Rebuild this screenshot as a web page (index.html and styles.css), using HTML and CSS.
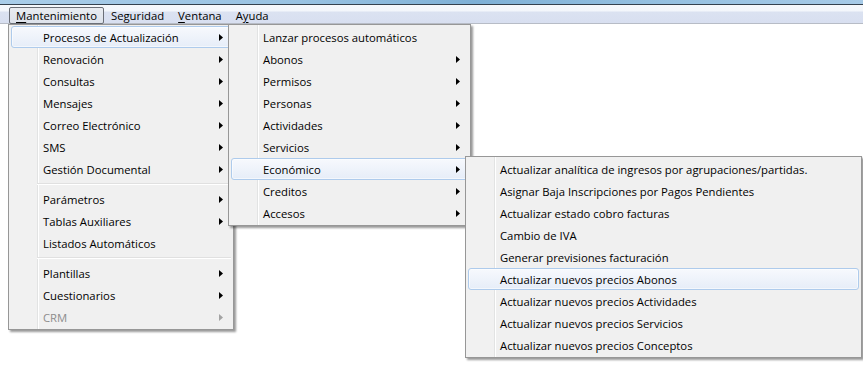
FILE: index.html
```html
<!DOCTYPE html>
<html lang="es">
<head>
<meta charset="utf-8">
<title>Menú</title>
<link rel="stylesheet" href="styles.css">
</head>
<body>
<div class="titlebar"></div>
<div class="menubar">
  <span class="mb-item pressed"><u>M</u>antenimiento</span>
  <span class="mb-item">Seguridad</span>
  <span class="mb-item"><u>V</u>entana</span>
  <span class="mb-item">A<u>y</u>uda</span>
</div>

<div class="menu m1">
  <div class="item hl"><span>Procesos de Actualización</span><svg class="arrow" width="4" height="7" viewBox="0 0 4 7"><polygon points="0,0 4,3.5 0,7"/></svg></div>
  <div class="item"><span>Renovación</span><svg class="arrow" width="4" height="7" viewBox="0 0 4 7"><polygon points="0,0 4,3.5 0,7"/></svg></div>
  <div class="item"><span>Consultas</span><svg class="arrow" width="4" height="7" viewBox="0 0 4 7"><polygon points="0,0 4,3.5 0,7"/></svg></div>
  <div class="item"><span>Mensajes</span><svg class="arrow" width="4" height="7" viewBox="0 0 4 7"><polygon points="0,0 4,3.5 0,7"/></svg></div>
  <div class="item"><span>Correo Electrónico</span><svg class="arrow" width="4" height="7" viewBox="0 0 4 7"><polygon points="0,0 4,3.5 0,7"/></svg></div>
  <div class="item"><span>SMS</span><svg class="arrow" width="4" height="7" viewBox="0 0 4 7"><polygon points="0,0 4,3.5 0,7"/></svg></div>
  <div class="item"><span>Gestión Documental</span><svg class="arrow" width="4" height="7" viewBox="0 0 4 7"><polygon points="0,0 4,3.5 0,7"/></svg></div>
  <div class="sep"></div>
  <div class="item"><span>Parámetros</span><svg class="arrow" width="4" height="7" viewBox="0 0 4 7"><polygon points="0,0 4,3.5 0,7"/></svg></div>
  <div class="item"><span>Tablas Auxiliares</span><svg class="arrow" width="4" height="7" viewBox="0 0 4 7"><polygon points="0,0 4,3.5 0,7"/></svg></div>
  <div class="item"><span>Listados Automáticos</span></div>
  <div class="sep"></div>
  <div class="item"><span>Plantillas</span><svg class="arrow" width="4" height="7" viewBox="0 0 4 7"><polygon points="0,0 4,3.5 0,7"/></svg></div>
  <div class="item"><span>Cuestionarios</span><svg class="arrow" width="4" height="7" viewBox="0 0 4 7"><polygon points="0,0 4,3.5 0,7"/></svg></div>
  <div class="item disabled"><span>CRM</span><svg class="arrow" width="4" height="7" viewBox="0 0 4 7"><polygon points="0,0 4,3.5 0,7"/></svg></div>
</div>

<div class="menu m2">
  <div class="item"><span>Lanzar procesos automáticos</span></div>
  <div class="item"><span>Abonos</span><svg class="arrow" width="4" height="7" viewBox="0 0 4 7"><polygon points="0,0 4,3.5 0,7"/></svg></div>
  <div class="item"><span>Permisos</span><svg class="arrow" width="4" height="7" viewBox="0 0 4 7"><polygon points="0,0 4,3.5 0,7"/></svg></div>
  <div class="item"><span>Personas</span><svg class="arrow" width="4" height="7" viewBox="0 0 4 7"><polygon points="0,0 4,3.5 0,7"/></svg></div>
  <div class="item"><span>Actividades</span><svg class="arrow" width="4" height="7" viewBox="0 0 4 7"><polygon points="0,0 4,3.5 0,7"/></svg></div>
  <div class="item"><span>Servicios</span><svg class="arrow" width="4" height="7" viewBox="0 0 4 7"><polygon points="0,0 4,3.5 0,7"/></svg></div>
  <div class="item hl"><span>Económico</span><svg class="arrow" width="4" height="7" viewBox="0 0 4 7"><polygon points="0,0 4,3.5 0,7"/></svg></div>
  <div class="item"><span>Creditos</span><svg class="arrow" width="4" height="7" viewBox="0 0 4 7"><polygon points="0,0 4,3.5 0,7"/></svg></div>
  <div class="item"><span>Accesos</span><svg class="arrow" width="4" height="7" viewBox="0 0 4 7"><polygon points="0,0 4,3.5 0,7"/></svg></div>
</div>

<div class="menu m3">
  <div class="item"><span>Actualizar analítica de ingresos por agrupaciones/partidas.</span></div>
  <div class="item"><span>Asignar Baja Inscripciones por Pagos Pendientes</span></div>
  <div class="item"><span>Actualizar estado cobro facturas</span></div>
  <div class="item"><span>Cambio de IVA</span></div>
  <div class="item"><span>Generar previsiones facturación</span></div>
  <div class="item hl"><span>Actualizar nuevos precios Abonos</span></div>
  <div class="item"><span>Actualizar nuevos precios Actividades</span></div>
  <div class="item"><span>Actualizar nuevos precios Servicios</span></div>
  <div class="item"><span>Actualizar nuevos precios Conceptos</span></div>
</div>
</body>
</html>
```
FILE: styles.css
```css
html, body {
  margin: 0;
  padding: 0;
}
body {
  position: relative;
  width: 863px;
  height: 368px;
  overflow: hidden;
  background: #ffffff;
  font-family: "Open Sans", "Noto Sans", sans-serif;
  font-size: 11.3px;
  color: #000000;
}
.titlebar {
  height: 4px;
  background: linear-gradient(to right, #a9cde9 0%, #98c2e2 35%, #7eb0d6 55%, #93bfe0 75%, #a6cae7 100%);
  border-bottom: 1px solid #34414e;
}
.menubar {
  display: flex;
  align-items: flex-start;
  height: 18px;
  padding-left: 9px;
  border-bottom: 1px solid #b7bcc6;
  background: linear-gradient(#f5f8fc 0, #f3f6fb 6px, #dbe2f1 7px, #d8dff0 100%);
}
.mb-item {
  margin-top: 2px;
  height: 15px;
  line-height: 15px;
  padding: 0 6px;
  border: 1px solid transparent;
  border-radius: 2px;
  white-space: nowrap;
}
.mb-item.pressed {
  border-color: #6b6f77;
  background: linear-gradient(#e9ecf1, #dde2ea);
}
.mb-item u {
  text-decoration-thickness: 1px;
  text-underline-offset: 2px;
}
.menu {
  position: absolute;
  box-sizing: border-box;
  border: 1px solid #979797;
  padding: 1px 2px;
  background: linear-gradient(to right, #f1f1f1 0, #f1f1f1 28px, #e2e3e3 28px, #e2e3e3 29px, #ffffff 29px, #ffffff 30px, #f0f0f0 30px);
  box-shadow: 2px 2px 2px rgba(0, 0, 0, 0.4);
}
.m1 { left: 8px; top: 24px; width: 226px; }
.m2 { left: 228px; top: 24px; width: 243px; }
.m3 { left: 465px; top: 156px; width: 397px; }
.item {
  display: flex;
  align-items: center;
  justify-content: space-between;
  box-sizing: border-box;
  height: 22px;
  line-height: 20px;
  padding: 0 7px 0 31px;
  border: 1px solid transparent;
  border-radius: 3px;
  white-space: nowrap;
}
.item > span {
  position: relative;
  top: 1px;
}
.item.hl {
  border-color: #aecbec;
  background: linear-gradient(#f7f9fd, #e6edf8);
  box-shadow: inset 0 0 0 1px rgba(255, 255, 255, 0.55);
}
.item.disabled {
  color: #8d8d8d;
}
.arrow {
  display: block;
  fill: #000000;
}
.item.disabled .arrow {
  fill: #a3a3a3;
}
.sep {
  height: 8px;
  margin-left: 26px;
  background: linear-gradient(transparent 3px, #e0e0e0 3px, #e0e0e0 4px, #ffffff 4px, #ffffff 5px, transparent 5px);
}
```
